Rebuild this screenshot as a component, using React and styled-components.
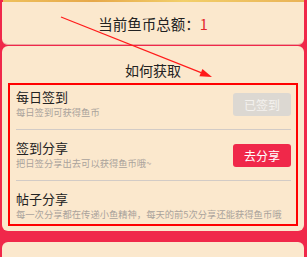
import React from "react";
import styled, { createGlobalStyle } from "styled-components";

const GlobalStyle = createGlobalStyle`
  html, body {
    margin: 0;
    padding: 0;
    background: #f0284a;
    overflow: hidden;
  }
  body {
    font-family: "Noto Sans CJK SC", "Noto Sans", sans-serif;
  }
`;

const WAYS = [
  { title: "每日签到", desc: "每日签到可获得鱼币", btn: "已签到", done: true },
  { title: "签到分享", desc: "把日签分享出去可以获得鱼币哦~", btn: "去分享" },
  {
    title: "帖子分享",
    desc: "每一次分享都在传递小鱼精神，每天的前5次分享还能获得鱼币哦",
  },
];

function App() {
  return (
    <>
      <GlobalStyle />
      <Page>
        <TopStrip />
        <Column>
          <TotalCard>
            当前鱼币总额：<Amount>1</Amount>
          </TotalCard>
          <Card>
            <CardTitle>如何获取</CardTitle>
            <WayList>
              {WAYS.map((w, i) => (
                <WayRow key={i} $first={i === 0} $last={i === WAYS.length - 1}>
                  <WayText>
                    <WayTitle>{w.title}</WayTitle>
                    <WayDesc>{w.desc}</WayDesc>
                  </WayText>
                  {w.btn && <WayBtn $done={w.done}>{w.btn}</WayBtn>}
                </WayRow>
              ))}
            </WayList>
          </Card>
          <Band />
          <Card $tall />
        </Column>
        <Arrow width="307" height="257" viewBox="0 0 307 257">
          <line x1="61" y1="17" x2="201" y2="72.6" stroke="#ff1a1a" strokeWidth="1.2" />
          <polygon points="212,77 199.4,76.3 202.4,68.9" fill="#ff1a1a" />
        </Arrow>
      </Page>
    </>
  );
}
export default App;

const Page = styled.div`
  position: relative;
  width: 307px;
  height: 257px;
  overflow: hidden;
  background: #f0284a;
`;

const TopStrip = styled.div`
  height: 2px;
  margin: 0 3px;
  background: linear-gradient(90deg, #eec05c, #e6a84a 30%, #f2cf6a 60%, #e9b357);
`;

const Column = styled.div`
  display: flex;
  flex-direction: column;
  padding: 0 3px 0 2px;
`;

const TotalCard = styled.div`
  height: 43px;
  background: #fbe8cd;
  border-radius: 0 0 6px 6px;
  border-bottom: 1px solid #eca39e;
  display: flex;
  align-items: center;
  justify-content: center;
  font-size: 14.5px;
  color: #222;
  padding-top: 1px;
  box-sizing: border-box;
`;

const Amount = styled.span`
  color: #e3262c;
`;

const Card = styled.div`
  background: #fbe8cd;
  border-radius: 6px;
  padding: 14px 6px 5px;
  margin-top: 1px;
  height: ${(p) => (p.$tall ? "40px" : "auto")};
`;

const CardTitle = styled.div`
  text-align: center;
  font-size: 14px;
  line-height: 20px;
  color: #222;
  margin-bottom: 3px;
`;

const WayList = styled.div`
  border: 2px solid #ff0000;
  padding: 0 5px 0 6px;
`;

const WayRow = styled.div`
  display: flex;
  align-items: center;
  justify-content: space-between;
  padding: ${(p) => (p.$first ? "4px" : "10px")} 0
    ${(p) => (p.$last ? "2px" : "9px")};
  border-bottom: ${(p) => (p.$last ? "none" : "1px solid #d2cbc6")};
`;

const WayText = styled.div`
  display: flex;
  flex-direction: column;
`;

const WayTitle = styled.div`
  font-size: 13px;
  line-height: 16px;
  color: #222;
`;

const WayDesc = styled.div`
  font-size: 9.3px;
  line-height: 15px;
  color: #aaa39c;
  white-space: nowrap;
`;

const WayBtn = styled.div`
  width: 58px;
  height: 23px;
  border-radius: 3px;
  background: ${(p) => (p.$done ? "#dcd8d2" : "#f0284a")};
  color: ${(p) => (p.$done ? "#f4f2ef" : "#fff")};
  font-size: 12px;
  display: flex;
  align-items: center;
  justify-content: center;
  flex-shrink: 0;
`;

const Band = styled.div`
  height: 10px;
`;

const Arrow = styled.svg`
  position: absolute;
  left: 0;
  top: 0;
  pointer-events: none;
`;
